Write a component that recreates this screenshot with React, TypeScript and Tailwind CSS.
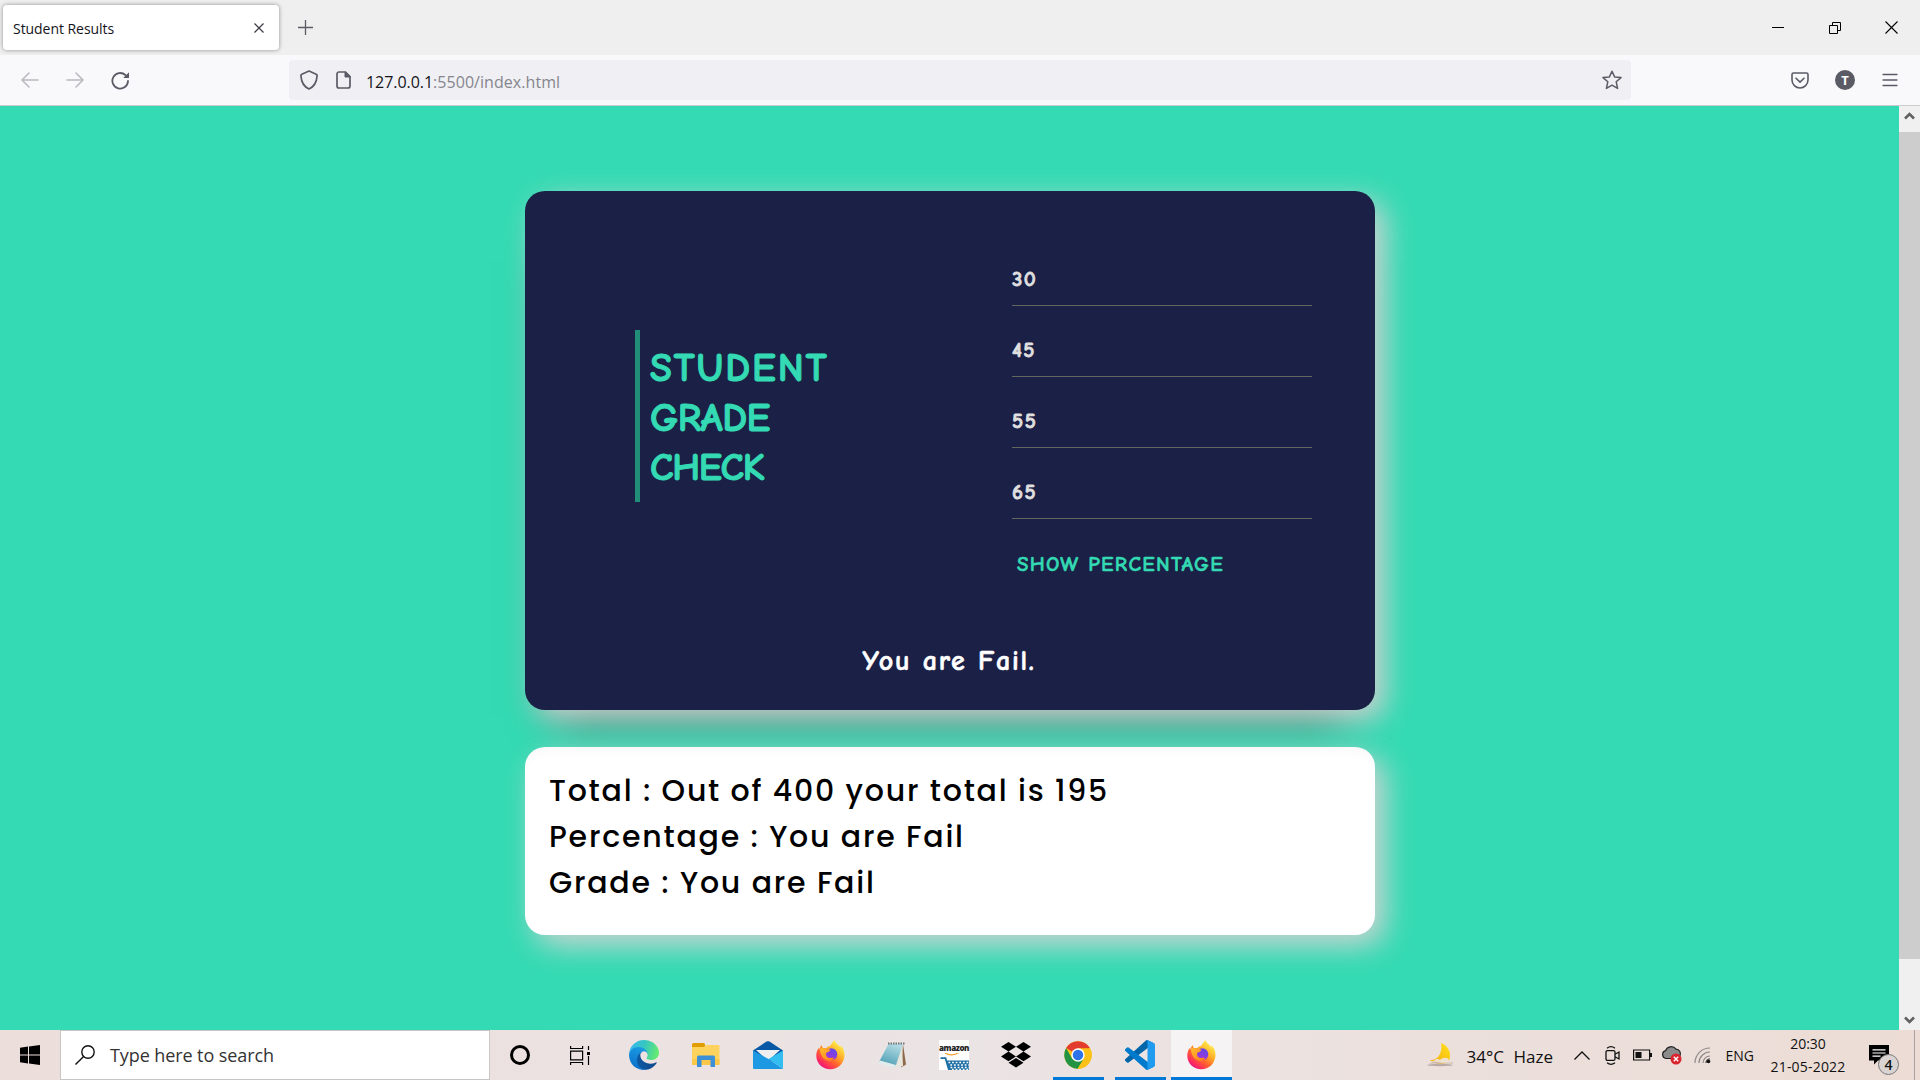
import React from "react";

function TabStrip() {
  return (
    <header className="flex h-[55px] items-center bg-[#efefef]">
      <div className="ml-[3px] flex h-[45px] w-[276px] items-center justify-between rounded bg-white pl-[10px] pr-[15px] shadow-[0_0_4px_rgba(0,0,0,0.4)]">
        <span className="pt-px text-[14px] tracking-[-0.05px] text-[#15141a]">Student Results</span>
        <svg width="10" height="10" viewBox="0 0 10 10" stroke="#3a3a42" strokeWidth="1.2"><path d="M.5.5l9 9M9.500.5l-9 9" /></svg>
      </div>
      <svg className="ml-[19px]" width="15" height="15" viewBox="0 0 15 15" stroke="#5b5b66" strokeWidth="1.3"><path d="M7.500 0v15M0 7.500h15" /></svg>
      <div className="ml-auto mr-[22px] flex items-center">
        <svg width="12" height="12" viewBox="0 0 12 12"><path d="M0 5.500h12" stroke="#000" /></svg>
        <svg className="ml-[45px]" width="12" height="12" viewBox="0 0 12 12" fill="none" stroke="#000"><path d="M.5 3.500h8v8h-8zM3.500 3V.5h8v8H9" /></svg>
        <svg className="ml-[44px]" width="13" height="13" viewBox="0 0 13 13" stroke="#000" strokeWidth="1.1"><path d="M.5.5l12 12M12.500.5l-12 12" /></svg>
      </div>
    </header>
  );
}

function Toolbar() {
  return (
    <nav className="flex h-[51px] items-center border-b border-[#cccccf] bg-[#f9f9fb]">
      <div className="ml-[21px] flex w-[268px] shrink-0 items-center gap-[27px]">
        <svg width="18" height="16" viewBox="0 0 18 16" fill="none" stroke="#b9b9be" strokeWidth="1.5" strokeLinecap="round" strokeLinejoin="round"><path d="M17 8H1M8 1L1 8l7 7" /></svg>
        <svg width="18" height="16" viewBox="0 0 18 16" fill="none" stroke="#b9b9be" strokeWidth="1.5" strokeLinecap="round" strokeLinejoin="round"><path d="M1 8h16M10 1l7 7-7 7" /></svg>
        <svg width="19" height="19" viewBox="0 0 19 19" fill="none" stroke="#5b5b66" strokeWidth="1.8" strokeLinecap="round"><path d="M17 10a7.800 7.800 0 1 1-2.600-6" /><path d="M18 1.200v5.800h-5.800z" fill="#5b5b66" stroke="none" /></svg>
      </div>
      <div className="flex h-10 w-[1342px] items-center rounded bg-[#f0f0f4] pl-[11px] pr-[9px]">
        <svg width="18" height="20" viewBox="0 0 18 20" fill="none" stroke="#5b5b66" strokeWidth="1.7" strokeLinejoin="round"><path d="M9 1l7.200 3.200c.6.3 1 .8.9 1.400C16.700 12 14.500 16.500 9 19 3.500 16.500 1.300 12 .9 5.600c0-.6.3-1.100.9-1.400z" /></svg>
        <svg className="ml-[18px]" width="15" height="18" viewBox="0 0 15 18" fill="none" stroke="#5b5b66" strokeWidth="1.7" strokeLinejoin="round"><path d="M3 1h6.500L14 5.500V15a2 2 0 0 1-2 2H3a2 2 0 0 1-2-2V3a2 2 0 0 1 2-2z" /><path d="M9 .8V6h5.300z" fill="#5b5b66" strokeWidth="1" /></svg>
        <span className="ml-[15px] pt-[3px] text-[16px] text-[#15141a]"><span className="tracking-[-0.05px]">127.0.0.1</span><span className="tracking-[0.05px] text-[#85858d]">:5500/index.html</span></span>
        <svg className="ml-auto" width="20" height="20" viewBox="0 0 20 20" fill="none" stroke="#5b5b66" strokeWidth="1.5" strokeLinejoin="round"><path d="M10 1.200l2.600 5.700 6.400.7-4.800 4.200 1.400 6.600L10 15.200l-5.600 3.200 1.400-6.600L1 7.600l6.400-.7z" /></svg>
      </div>
      <div className="ml-auto mr-[22px] flex items-center">
        <svg width="18" height="17" viewBox="0 0 18 17" fill="none" stroke="#5b5b66" strokeWidth="1.600" strokeLinecap="round" strokeLinejoin="round"><path d="M2.500 1h13A1.500 1.500 0 0 1 17 2.500V8a8 8 0 0 1-16 0V2.500A1.500 1.500 0 0 1 2.500 1z" /><path d="M5 6.200l4 3.900 4-3.900" /></svg>
        <span className="ml-[26px] flex size-5 items-center justify-center rounded-full bg-[#5b5b66] text-[13px] font-bold leading-none text-white">T</span>
        <svg className="ml-[27px]" width="16" height="14" viewBox="0 0 16 14" stroke="#5b5b66" strokeWidth="1.300" strokeLinecap="round"><path d="M1 1.500h14M1 7h14M1 12.500h14" /></svg>
      </div>
    </nav>
  );
}

const marks = ["30", "45", "55", "65"];

function Page() {
  return (
    <main className="flex flex-1 flex-col bg-[#33dab3] pl-[525px] pt-[85px]">
      <section className="flex h-[519px] w-[850px] flex-col rounded-[20px] bg-[#1b2046] font-['Comic_Neue','Comic_Sans_MS',Lato,sans-serif] font-bold shadow-[10px_10px_30px_#d3d3d3,0_38px_44px_-32px_rgba(0,0,0,0.6)]">
        <div className="flex">
          <h1 className="ml-[110px] mt-[139px] h-[172px] w-[377px] shrink-0 border-l-[5px] border-[#218e78] pl-[10px] pt-[13px] text-[40px] leading-[50px] text-[#33dab3] [-webkit-text-stroke:1px_#33dab3]">
            <span className="block tracking-[1.9px]">STUDENT</span>
            <span className="block tracking-[-0.5px]">GRADE</span>
            <span className="block text-[39px] tracking-[-1.300px]">CHECK</span>
          </h1>
          <div className="mt-[44px] flex w-[300px] flex-col">
            {marks.map((m) => (
              <div key={m} className="flex h-[71px] items-end border-b border-[#65655f] pb-[13px] text-[21px] leading-[26px] tracking-[1.5px] text-[#dfdfdf] [-webkit-text-stroke:0.8px_#dfdfdf]">{m}</div>
            ))}
            <button className="mt-[32px] whitespace-nowrap pl-[5px] text-left text-[21px] leading-[26px] tracking-[1.3px] text-[#33dab3] [-webkit-text-stroke:0.5px_#33dab3]">SHOW PERCENTAGE</button>
          </div>
        </div>
        <p className="mt-[68px] pr-[2px] text-center text-[28px] leading-[32px] tracking-[1.7px] text-white [-webkit-text-stroke:0.6px_#fff]">You are Fail.</p>
      </section>
      <section className="mt-[37px] h-[188px] w-[850px] rounded-[20px] bg-white pl-[24px] pt-[21px] font-[Poppins,Inter,sans-serif] text-[30px] font-medium leading-[46px] tracking-[1.77px] text-black shadow-[10px_10px_30px_#d3d3d3,inset_0_16px_16px_-16px_rgba(0,0,0,0.05)]">
        <p>Total : Out of 400 your total is 195</p>
        <p>Percentage : You are Fail</p>
        <p>Grade : You are Fail</p>
      </section>
    </main>
  );
}

function ScrollBar() {
  return (
    <aside className="flex w-[21px] flex-col items-center bg-[#f0f0f0]">
      <div className="flex h-[26px] items-center"><svg className="mb-[8px]" width="11" height="9" viewBox="0 0 11 9" fill="none" stroke="#606060" strokeWidth="2.600"><path d="M1 7.500l4.500-4.500L10 7.500" /></svg></div>
      <div className="h-[827px] w-full bg-[#cdcdcd]" />
      <svg className="mb-[5px] mt-auto" width="11" height="9" viewBox="0 0 11 9" fill="none" stroke="#606060" strokeWidth="2.600"><path d="M1 1.500L5.500 6 10 1.500" /></svg>
    </aside>
  );
}

function Edge() {
  return (
    <svg width="30" height="30" viewBox="0 0 256 256">
      <defs>
        <linearGradient id="e1" x1="0" y1="0" x2="1" y2="0"><stop offset="0" stopColor="#0c59a4" /><stop offset="1" stopColor="#114a8b" /></linearGradient>
        <linearGradient id="e2" x1=".5" y1="0" x2=".3" y2="1"><stop offset="0" stopColor="#1b9de2" /><stop offset="1" stopColor="#0a6cc9" /></linearGradient>
        <linearGradient id="e3" x1="0" y1=".3" x2="1" y2=".5"><stop offset="0" stopColor="#35b8f1" /><stop offset=".5" stopColor="#36c7c0" /><stop offset="1" stopColor="#66eb6e" /></linearGradient>
      </defs>
      <path fill="url(#e1)" d="M231 190.500a93 93 0 0 1-10.500 4.700 102 102 0 0 1-35.900 6.500c-47.300 0-88.500-32.500-88.500-74.300a31.500 31.500 0 0 1 16.400-27.300C69.700 101.900 58.700 146.500 58.700 172.600c0 73.900 68.100 81.400 82.800 81.400 7.900 0 19.800-2.300 27-4.600l1.300-.4a128 128 0 0 0 66.600-52.800 4 4 0 0 0-5.400-5.700z" />
      <path fill="url(#e2)" d="M105.700 241.400a79 79 0 0 1-22.700-21.300 80.700 80.700 0 0 1 29.500-120c3.100-1.500 8.500-4.100 15.600-4a32.400 32.400 0 0 1 25.700 13 31.900 31.900 0 0 1 6.300 18.700c0-.2 24.500-79.600-80-79.600C36.200 48.200.1 89.900.1 126.400a130 130 0 0 0 12.100 56 128 128 0 0 0 156.400 67.100 75.500 75.500 0 0 1-62.800-8z" />
      <path fill="url(#e3)" d="M152.300 148.900c-.8 1-3.300 2.500-3.300 5.700 0 2.600 1.700 5.100 4.700 7.200 14.400 10 41.500 8.700 41.600 8.700a59.600 59.600 0 0 0 30.300-8.300 61.400 61.400 0 0 0 30.400-52.900c.3-22.400-8-37.300-11.300-43.900C223.500 23.900 177.700 0 128 0A128 128 0 0 0 0 126.200c.5-36.500 36.800-66 80-66 3.500 0 23.500.3 42 10 16.300 8.600 24.900 19 30.800 29.200 6.200 10.700 7.300 24.100 7.300 29.500 0 5.300-2.700 13.300-7.800 20z" />
    </svg>
  );
}

function Explorer() {
  return (
    <svg width="28" height="24" viewBox="0 0 28 24">
      <path d="M0 1.500A1.500 1.500 0 0 1 1.500 0h10A1.500 1.500 0 0 1 13 1.500V5H0z" fill="#e19c00" />
      <path d="M0 4h12l2-2h12.500A1 1 0 0 1 27.500 3v18a1 1 0 0 1-1 1H1a1 1 0 0 1-1-1z" fill="#fdd35d" />
      <path d="M0 16h27.500v5a1 1 0 0 1-1 1H1a1 1 0 0 1-1-1z" fill="#fbc748" />
      <path d="M5 24V14a1.500 1.500 0 0 1 1.500-1.500h15A1.500 1.500 0 0 1 23 14v10h-4.500v-7h-9v7z" fill="#3d8fd6" />
    </svg>
  );
}

function Mail() {
  return (
    <svg width="30" height="28" viewBox="0 0 30 28">
      <path d="M0 9.500L13.500.6a3 3 0 0 1 3 0L30 9.500V20H0z" fill="#0859a5" />
      <path d="M3 9h24L15 20z" fill="#efefef" />
      <path d="M30 9.500L15.500 18 30 28z" fill="#34bdf0" />
      <path d="M30 28L15.500 18 0 9.500V27a1 1 0 0 0 1 1z" fill="#1d98e3" />
    </svg>
  );
}

function Firefox({ id }: { id: string }) {
  return (
    <svg width="29" height="30" viewBox="0 0 29 30">
      <defs>
        <linearGradient id={id + "a"} x1=".85" y1=".1" x2=".2" y2=".95"><stop offset="0" stopColor="#fff44f" /><stop offset=".35" stopColor="#ffb02a" /><stop offset=".6" stopColor="#ff6a2b" /><stop offset=".85" stopColor="#ff2d5a" /><stop offset="1" stopColor="#e31587" /></linearGradient>
        <linearGradient id={id + "b"} x1=".8" y1="0" x2=".3" y2="1"><stop offset="0" stopColor="#5f4be8" /><stop offset="1" stopColor="#a631d8" /></linearGradient>
        <linearGradient id={id + "c"} x1="0" y1="0" x2="1" y2="1"><stop offset="0" stopColor="#ffbd2e" /><stop offset="1" stopColor="#ff7a1a" /></linearGradient>
      </defs>
      <path fill={"url(#" + id + "a)"} d="M18.500 0c1 3.500 4.500 4.800 6.300 7.500 0-1 0-1.500-.3-2.500 3 3 4.200 7 4 10.800C28 23.500 22 29.300 14.300 29.300 6.500 29.300.5 23.500.3 16c-.1-3 .8-6 2.500-8.200 0 .8 0 1.300.2 1.900C4 7.300 5 6 6 5c0 1.500.3 2.500 1 3.200 1-.3 2-.2 3 0C11 7 12.500 6.300 14 6c1.500-2 2.800-4 4.500-6z" />
      <circle cx="15.300" cy="14.300" r="6" fill={"url(#" + id + "b)"} />
      <path fill={"url(#" + id + "c)"} d="M4 8.500c3-.8 5 0 6.500 1 1-.3 2.500-.2 3.800.3-.6 2-2 2.300-4 3-.5 1.800-.2 3.800 1.700 4.800 2.200 1.200 4.300-.3 6 .5-1 2.500-4 3.500-7 2.500C6.500 19 4 14 4 8.500z" />
    </svg>
  );
}

function Notepad() {
  return (
    <svg width="28" height="27" viewBox="0 0 28 27">
      <defs>
        <linearGradient id="np" x1=".7" y1="0" x2=".3" y2="1"><stop offset="0" stopColor="#b5dce4" /><stop offset=".55" stopColor="#79b9c9" /><stop offset="1" stopColor="#4f9db2" /></linearGradient>
      </defs>
      <path d="M25 2l3 20.500-5 3z" fill="#8c6a48" />
      <path d="M24 2l1 22-8 2z" fill="#e6e6df" />
      <path d="M10.500 2H25l-7.500 22.500L1 20z" fill="url(#np)" />
      <path d="M1 20l16.500 4.500.5-1.500-16-4.500zM1 20l-.5 1L17 26l.5-1.500z" fill="#e0ecee" />
      <path d="M10 1.500h17" stroke="#6d7477" strokeWidth="2" strokeDasharray="1.500 1" />
    </svg>
  );
}

function Amazon() {
  return (
    <span className="flex size-[30px] flex-col items-center bg-white">
      <span className="mt-[3px] h-[10px] font-['Open_Sans',sans-serif] text-[8px] font-extrabold leading-[10px] tracking-[-0.4px] text-[#222]">amazon</span>
      <svg width="30" height="17" viewBox="0 0 30 17" fill="none">
        <path d="M6 0q7 4 14-.5" stroke="#f59b28" strokeWidth="1.300" />
        <path d="M1.500 5.200h5l3.500 11.800" stroke="#1d6fa5" strokeWidth="1.800" />
        <path d="M7.500 7.500H30V17H10.500z" fill="#1d6fa5" />
        <path d="M9.500 9.500H30M11.500 14.500H30" stroke="#fff" strokeWidth="1.700" strokeDasharray="1.800 1.800" />
        <path d="M11.300 12H30M13 16.700H30" stroke="#fff" strokeWidth="1.700" strokeDasharray="1.800 1.800" />
      </svg>
    </span>
  );
}

function Dropbox() {
  return (
    <svg width="30" height="26" viewBox="0 0 30 26"><path d="M7.500 0L15 4.800 7.500 9.600 0 4.800zM22.500 0L30 4.800l-7.500 4.800L15 4.800zM0 14.400l7.500-4.800L15 14.400l-7.500 4.800zM22.500 9.600l7.500 4.800-7.500 4.800-7.500-4.800zM7.500 20.800L15 16l7.500 4.800L15 25.600z" /></svg>
  );
}

function Chrome() {
  return (
    <svg width="28" height="28" viewBox="0 0 48 48">
      <circle cx="24" cy="24" r="23.500" fill="#fbc116" />
      <path d="M24 24L3.600 12.200A23.500 23.500 0 0 1 44.400 12.200z" fill="#e33b2e" />
      <path d="M3.600 12.200A23.500 23.500 0 0 0 23.500 47.500L34 30 24 24 13.800 29.800z" fill="#229342" />
      <path d="M24 12.500h20.400A23.500 23.500 0 0 1 23.500 47.500L34 29.800z" fill="#fbc116" />
      <circle cx="24" cy="24" r="11.500" fill="#fff" />
      <circle cx="24" cy="24" r="9" fill="#2c72e8" />
    </svg>
  );
}

function VSCode() {
  return (
    <svg width="30" height="30" viewBox="0 0 100 100">
      <path d="M96.500 10.800L75.900.9a6.200 6.200 0 0 0-7.100 1.200L1.300 63.600a4.200 4.200 0 0 0 0 6.200l5.500 5a4.200 4.200 0 0 0 5.300.2L93.400 13.400a4.100 4.100 0 0 1 6.600 3.300v-.2a6.300 6.300 0 0 0-3.500-5.700z" fill="#0065a9" />
      <path d="M96.500 89.200l-20.600 9.900a6.200 6.200 0 0 1-7.100-1.200L1.300 36.400a4.200 4.200 0 0 1 0-6.200l5.500-5a4.200 4.200 0 0 1 5.300-.2l81.300 61.600a4.100 4.100 0 0 0 6.600-3.300v.2a6.300 6.300 0 0 1-3.500 5.700z" fill="#007acc" />
      <path d="M75.900 99.100a6.200 6.200 0 0 1-7.100-1.200c2.300 2.300 6.200.7 6.200-2.600V4.700c0-3.300-3.900-4.900-6.200-2.600A6.200 6.200 0 0 1 75.900.9l20.600 9.900a6.300 6.300 0 0 1 3.500 5.700v67a6.300 6.300 0 0 1-3.500 5.700z" fill="#1f9cf0" />
    </svg>
  );
}

function Slot({ children, open, active }: { children: React.ReactNode; open?: boolean; active?: boolean }) {
  return (
    <div className={active ? "flex h-full w-[61px] flex-col items-center bg-[#f5f3f3]" : "flex h-full w-[62px] flex-col items-center"}>
      <div className="flex h-[50px] items-center">{children}</div>
      {open && <div className={active ? "-mt-[3px] h-[3px] w-full bg-[#0078d7]" : "-mt-[3px] h-[3px] w-[51px] bg-[#0078d7]"} />}
    </div>
  );
}

function Tray() {
  return (
    <div className="ml-auto flex h-full items-center text-[#111]">
      <svg width="30" height="26" viewBox="0 0 30 26">
        <defs><linearGradient id="mn" x1="0" y1="1" x2="1" y2="0"><stop offset="0" stopColor="#f5a90c" /><stop offset="1" stopColor="#ffe21e" /></linearGradient></defs>
        <path d="M16 1c8 3 11 11 8 18-4 4-14 4.500-19-1 8 1 13-8 11-17z" fill="url(#mn)" />
        <ellipse cx="15" cy="23" rx="13" ry="1.200" fill="#b9a9a4" />
        <path d="M4 21.500c0-2 3-3 5-2 1-3 5-3 6-1 1-3 8-4 9 0 3-.5 4 1 4 2z" fill="#efe0d4" />
        <path d="M4 21.500c3-2 8-2 11-1s8 0 13 0v1z" fill="#c9b8ae" />
      </svg>
      <span className="ml-[12px] w-[47px] pt-[3px] text-[17px]">34°C</span>
      <span className="w-[60px] pt-[3px] text-[17px]">Haze</span>
      <svg width="16" height="9" viewBox="0 0 16 9" fill="none" stroke="#111" strokeWidth="1.300"><path d="M.5 8.500L8 1l7.500 7.500" /></svg>
      <svg className="ml-[15px]" width="15" height="19" viewBox="0 0 15 19" fill="none" stroke="#111" strokeWidth="1.300"><rect x="1" y="4.600" width="9" height="9.800" rx="1.500" /><path d="M10 8.200l4-2.200v7l-4-2.200M2 2.200q4-3 8 0M2 16.800q4 3 8 0" /></svg>
      <svg className="ml-[13px]" width="19" height="12" viewBox="0 0 19 12"><path d="M.6 1h16v10H.6z" fill="none" stroke="#111" strokeWidth="1.200" /><path d="M2.500 3h6v6h-6zM17 4h2v4h-2z" fill="#111" /></svg>
      <svg className="ml-[9px]" width="21" height="19" viewBox="0 0 21 19"><path d="M5 12.500a4 4 0 0 1-.5-7.800 6 6 0 0 1 10.500-1.500c3.500.3 5 3 4 6.500l-3 2.800z" fill="#8b8b8b" stroke="#222" strokeWidth="1.200" /><circle cx="15" cy="13" r="5.500" fill="#d9232e" /><path d="M12.800 10.800l4.400 4.400M17.200 10.800l-4.400 4.400" stroke="#fff" strokeWidth="1.400" /></svg>
      <svg className="ml-[12px]" width="17" height="17" viewBox="0 0 17 17" fill="none" stroke="#8f8a89" strokeWidth="1.200"><path d="M1 16A15 15 0 0 1 16 1M5 16A11 11 0 0 1 16 5" /><path d="M9 16a7 7 0 0 1 7-7" /><path d="M12 16a4 4 0 0 1 4-4" stroke="#333" /><circle cx="14.500" cy="14.500" r="1.800" fill="#111" stroke="none" /></svg>
      <span className="ml-[15px] text-[14px]">ENG</span>
      <div className="ml-[14px] flex w-[80px] flex-col items-center text-[14px] leading-[23px]">
        <span>20:30</span>
        <span className="tracking-[0.2px]">21-05-2022</span>
      </div>
      <div className="relative ml-[21px] h-[30px] w-[30px]">
        <svg className="mt-[5px]" width="20" height="20" viewBox="0 0 20 20"><path d="M0 0h20v15.500H9L5 19.500v-4H0z" /><path d="M3.500 4.800h13M3.500 8h13M3.500 11.200h8" stroke="#fff" strokeWidth="1.200" /></svg>
        <span className="absolute left-[9px] top-[14px] flex size-[21px] items-center justify-center rounded-full border border-[#777] bg-[#d9d4d2] text-[14px] font-semibold leading-none">4</span>
      </div>
      <div className="ml-[15px] mr-[5px] h-full w-px bg-[#aaa3a1]" />
    </div>
  );
}

function Taskbar() {
  return (
    <footer className="flex h-[50px] items-center bg-gradient-to-r from-[#ecdedb] via-[#ebe4e4] to-[#ecdcd5]">
      <div className="flex w-[60px] justify-center">
        <svg width="20" height="20" viewBox="0 0 20 20"><path d="M0 2.700L8 1.500v8H0zM9 1.400L20 0v9.500H9zM0 10.500h8v8l-8-1.200zM9 10.500h11V20L9 18.600z" /></svg>
      </div>
      <div className="flex h-full w-[430px] items-center border border-[#c9c5c4] bg-white pl-[14px]">
        <svg width="20" height="20" viewBox="0 0 20 20" fill="none" stroke="#111" strokeWidth="1.400"><circle cx="13" cy="7" r="6.200" /><path d="M8.600 11.400L.5 19.500" /></svg>
        <span className="ml-[15px] text-[18px] tracking-[-0.09px] text-[#333]">Type here to search</span>
      </div>
      <div className="-ml-px flex h-full">
        <Slot><span className="size-[20px] rounded-full border-[3px] border-black" /></Slot>
        <Slot><svg className="-ml-[3px]" width="21" height="19" viewBox="0 0 21 19" fill="none" stroke="#000" strokeWidth="1.200"><path d="M.6 0v2.500h12V0M.6 19v-2.500h12V19M.6 5.200h12v8.600H.6zM18.500 0v4M18.500 10v9" /><path d="M17 6h3v3h-3z" fill="#000" stroke="none" /></svg></Slot>
        <Slot><Edge /></Slot>
        <Slot><Explorer /></Slot>
        <Slot><Mail /></Slot>
        <Slot><Firefox id="fa" /></Slot>
        <Slot><Notepad /></Slot>
        <Slot><Amazon /></Slot>
        <Slot><Dropbox /></Slot>
        <Slot open><Chrome /></Slot>
        <Slot open><VSCode /></Slot>
        <Slot open active><Firefox id="fb" /></Slot>
      </div>
      <Tray />
    </footer>
  );
}

export default function App() {
  return (
    <div className="flex h-[1080px] w-[1920px] flex-col overflow-hidden font-['Segoe_UI','Open_Sans','Noto_Sans',sans-serif]">
      <TabStrip />
      <Toolbar />
      <div className="flex min-h-0 flex-1">
        <Page />
        <ScrollBar />
      </div>
      <Taskbar />
    </div>
  );
}
